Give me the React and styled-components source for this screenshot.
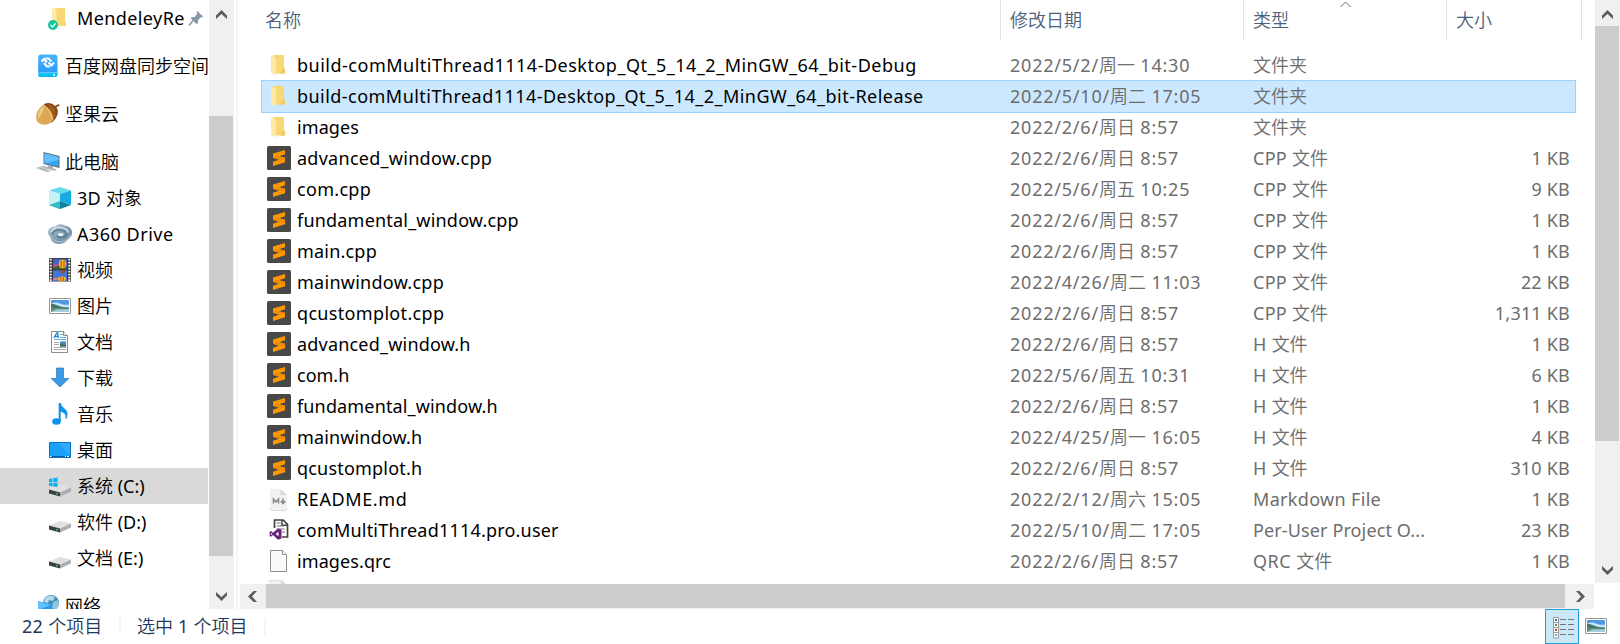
import React from 'react';
import styled, { createGlobalStyle, css } from 'styled-components';

const GlobalStyle = createGlobalStyle`
  * { box-sizing: border-box; }
  body {
    margin: 0;
    background: #fff;
    overflow: hidden;
    font-family: "Noto Sans", "Noto Sans CJK SC", sans-serif;
    font-size: 18px;
    color: #000;
  }
  svg { display: block; }
`;

const Window = styled.div`
  display: flex;
  flex-direction: column;
  width: 1620px;
  height: 644px;
  overflow: hidden;
`;

const Main = styled.div`
  display: flex;
  height: 609px;
  overflow: hidden;
`;

/* ---------- text runs ---------- */

const Hanzi = styled.span`
  font-weight: 350;
  letter-spacing: 0;
`;

function Mixed({ children }) {
  return String(children || '')
    .split(/([\u4e00-\u9fff]+)/)
    .filter(Boolean)
    .map((run, i) => (/[\u4e00-\u9fff]/.test(run) ? <Hanzi key={i}>{run}</Hanzi> : run));
}

/* ---------- navigation pane ---------- */

const NavPane = styled.nav`
  width: 209px;
  height: 609px;
  overflow: hidden;
`;

const NavItem = styled.div`
  display: flex;
  align-items: center;
  width: 208px;
  height: 36px;
  margin-top: ${p => (p.$gap ? 12 : 0)}px;
  padding-left: ${p => (p.$child ? 48 : 36)}px;
  background: ${p => (p.$selected ? '#d9d9d9' : 'transparent')};
  overflow: hidden;
`;

const NavIcon = styled.span`
  flex: none;
  width: 24px;
  height: 24px;
`;

const NavLabel = styled.span`
  flex: none;
  margin-left: 5px;
  line-height: 36px;
  white-space: pre;
  letter-spacing: ${p => p.$track || 0}px;
`;

const PinSlot = styled.span`
  flex: none;
  margin-left: 3px;
`;

const Splitter = styled.div`
  width: 6px;
  padding-left: 2px;
`;

const SplitterLine = styled.div`
  width: 2px;
  height: 609px;
  background: #f5f5f5;
`;

/* ---------- scroll bars ---------- */

const VerticalBar = styled.div`
  flex: none;
  display: flex;
  flex-direction: column;
  justify-content: space-between;
  width: 25px;
  height: ${p => p.$height}px;
  background: #f0f0f0;
`;

const VerticalArrow = styled.div`
  display: flex;
  justify-content: center;
  padding: ${p => (p.$end ? '0 0 8px' : '10px 0 0')};
  height: ${p => p.$size}px;
  align-items: ${p => (p.$end ? 'flex-end' : 'flex-start')};
`;

const VerticalThumb = styled.div`
  width: 24px;
  height: ${p => p.$size}px;
  background: #cdcdcd;
`;

const HorizontalBar = styled.div`
  display: flex;
  width: 1354px;
  height: 25px;
  background: #f0f0f0;
`;

const HorizontalArrow = styled.div`
  display: flex;
  align-items: center;
  width: ${p => p.$size}px;
  padding-left: ${p => p.$inset}px;
`;

const HorizontalThumb = styled.div`
  width: 1299px;
  height: 24px;
  background: #cdcdcd;
`;

/* ---------- file list ---------- */

const Content = styled.div`
  width: 1380px;
  display: flex;
  flex-direction: column;
`;

const ListArea = styled.div`
  display: flex;
  height: 584px;
`;

const FileView = styled.div`
  width: 1355px;
  height: 584px;
  overflow: hidden;
`;

const HeaderRow = styled.div`
  display: grid;
  grid-template-columns: 740px 243px 203px 135px;
  height: 40px;
  margin-left: 21px;
`;

const HeaderCell = styled.div`
  position: relative;
  height: 40px;
  padding-left: ${p => (p.$first ? 4 : 9)}px;
  border-right: 1px solid #e2e2e2;
  line-height: 41px;
  font-weight: 350;
  color: #4c607a;
`;

const SortMark = styled.span`
  position: absolute;
  top: 1px;
  left: 96px;
`;

const Rows = styled.div`
  padding: 10px 0 0 21px;
`;

const Row = styled.div`
  display: grid;
  grid-template-columns: 740px 243px 203px 129px;
  align-items: center;
  width: 1315px;
  height: 31px;
  ${p => p.$selected && css`
    height: 33px;
    margin: -1px 0;
    background: #cce8ff;
    box-shadow: inset 0 0 0 1px #99d1ff;
  `}
`;

const NameCell = styled.div`
  display: flex;
  align-items: center;
  padding-left: 5px;
  white-space: nowrap;
`;

const FileIcon = styled.span`
  flex: none;
  width: 26px;
  height: 25px;
  margin-right: 5px;
`;

const FileName = styled.span`
  line-height: 31px;
  letter-spacing: ${p => p.$track}px;
`;

const MetaCell = styled.div`
  padding-left: 9px;
  line-height: 31px;
  white-space: pre;
  color: #6d6d6d;
  letter-spacing: ${p => p.$track || 0}px;
`;

const SizeCell = styled(MetaCell)`
  padding-right: 6px;
  text-align: right;
`;

/* ---------- status bar ---------- */

const StatusBar = styled.footer`
  display: flex;
  align-items: flex-start;
  height: 35px;
  padding-left: 22px;
  color: #1e395b;
`;

const StatusText = styled.span`
  width: ${p => p.$width}px;
  line-height: 35px;
  white-space: pre;
  letter-spacing: 0.3px;
`;

const StatusDivider = styled.span`
  width: 2px;
  height: 17px;
  margin: 9px 16px 0 0;
  background: #f5f5f5;
`;

const ViewButtons = styled.div`
  display: flex;
  margin-left: auto;
  padding-right: 13px;
`;

const DetailsButton = styled.div`
  width: 34px;
  height: 35px;
  padding: 7px 0 0 7px;
  border: 1px solid #26a0da;
  background: #cbe8f6;
`;

const ThumbsButton = styled.div`
  padding: 9px 0 0 6px;
`;

/* ---------- glyphs ---------- */

const arrowPoints = {
  up: '0,5.6 5.5,0 11,5.6 11,9 5.5,4 0,9',
  down: '0,0 5.5,5 11,0 11,3.4 5.5,9 0,3.4',
  left: '5.6,0 9,0 4,5.5 9,11 5.6,11 0,5.5',
  right: '0,0 3.4,0 9,5.5 3.4,11 0,11 5,5.5',
};

function Arrow({ dir }) {
  const tall = dir === 'left' || dir === 'right';
  return (
    <svg width={tall ? 9 : 11} height={tall ? 11 : 9}>
      <polygon points={arrowPoints[dir]} fill="#5c5c5c" />
    </svg>
  );
}

function Folder() {
  return (
    <svg width="26" height="26" viewBox="0 0 26 26">
      <path d="M7 2h11v13l1 1v4.500H7z" fill="#f8d775" />
      <path d="M17.500 15l1.500 1v4.500H14z" fill="#f0ca62" />
      <path d="M5 2.200L10 5v17.500L5 20z" fill="#ffe9a6" />
    </svg>
  );
}

function SyncedFolder() {
  return (
    <svg width="24" height="24" viewBox="0 0 24 24">
      <path d="M7 2h10v13l1 1v4H8z" fill="#f8d775" />
      <path d="M4 2l4.500 2.500V22L4 20z" fill="#ffe9a6" />
      <circle cx="5" cy="19" r="5" fill="#10c99a" />
      <path d="M2.500 19l2 2 3.200-3.700" fill="none" stroke="#fff" strokeWidth="1.300" />
    </svg>
  );
}

function Pin() {
  return (
    <svg width="16" height="17" viewBox="0 0 16 17">
      <path d="M9.500 1l5.500 5.500-1.200 1-1-.3-2.800 3 .1 2.800-1.400 1.200-6-6 1.300-1.300 2.700.1L9.300 3.600 8.700 2z" fill="#8a99a8" />
      <path d="M5.300 10.300L1 15.500" stroke="#8a99a8" strokeWidth="1.600" />
    </svg>
  );
}

function BaiduDisk() {
  return (
    <svg width="24" height="24" viewBox="0 0 24 24">
      <defs>
        <linearGradient id="bd" x1="0" x2="0" y1="0" y2="1">
          <stop offset="0" stopColor="#48b4fb" />
          <stop offset="1" stopColor="#2c98fb" />
        </linearGradient>
      </defs>
      <path d="M4.500 .500h14.500q2.300 0 2.500 2.500v17H2.200V3Q2.300 .500 4.500 .500z" fill="url(#bd)" />
      <path d="M2 20.500q0-2 2-2h17.500v2.500q0 2-2 2H4q-2 0-2-2.500z" fill="#08bdf0" />
      <path d="M2.500 20.500q.3-1.800 2-1.800h16.500" fill="none" stroke="#86dcff" strokeWidth=".8" />
      <circle cx="18" cy="21" r="1" fill="#fff" />
      <g fill="none" stroke="#fff" strokeWidth="2">
        <path d="M5.500 7.500L8 5l3 3.200" />
        <path d="M9.500 4.500h3l3 3" />
        <path d="M18 8.500l-2.500 3-3-3" />
        <path d="M8 9l3 3.500h3" />
      </g>
    </svg>
  );
}

function Acorn() {
  return (
    <svg width="24" height="24" viewBox="0 0 24 24">
      <path d="M8 2Q15-.500 19 4l4-2 .700 1.600-3.200 1.700q3 5.200-.800 11.200L15.500 21z" fill="#874617" />
      <path d="M12 2q5 1 7 4.500l.700 8-3 5.500z" fill="#a05a20" />
      <path d="M7.500 2.500Q-1 9 .300 16.500.800 22 7.500 22.700q6.500.3 10-5.200Q16 7 7.500 2.500z" fill="#dda855" />
      <path d="M6.500 4.500Q1 10.500 2 17q5-5 6-13z" fill="#eccb86" />
      <path d="M8 3.500q6.500 5 8.500 14" fill="none" stroke="#f5ce80" strokeWidth="1" />
    </svg>
  );
}

function Computer() {
  return (
    <svg width="24" height="24" viewBox="0 0 24 24">
      <path d="M7.500 2l16 4v12l-16-4z" fill="#626b74" />
      <path d="M8.500 3.300l14 3.600v9.600l-14-3.300z" fill="#36a5f4" />
      <path d="M8.500 3.300l14 3.600v3l-14 3.300z" fill="#62c0ff" />
      <path d="M12 15l5 1.300v2l4 1.200-2 1.200-8-2z" fill="#a4b0b9" />
      <path d="M1 18l6-1.800 10 3-5 2.800z" fill="#dfe5e9" stroke="#9caab4" strokeWidth=".7" />
      <path d="M4 18.200l8 2.400M7 17l7 2.200M7 20l3-1.800M4.500 19l3-1.700" stroke="#8997a2" strokeWidth=".6" />
    </svg>
  );
}

function Cube() {
  return (
    <svg width="24" height="24" viewBox="0 0 24 24">
      <path d="M12 1l11 3.500L12 8 1 4.500z" fill="#68d9e8" />
      <path d="M1 19l11-4 11 4-11 4z" fill="#0e8299" />
      <path d="M1 19l11-4v8z" fill="#35bccb" />
      <path d="M1 4.500L12 8v7L1 19z" fill="#c5f2f5" />
      <path d="M23 4.500L12 8v7l11 4z" fill="#16ace0" />
    </svg>
  );
}

function A360() {
  return (
    <svg width="24" height="24" viewBox="0 0 24 24">
      <defs>
        <linearGradient id="swirl" x1="0" x2="1" y1="0" y2="1">
          <stop offset="0" stopColor="#b4ccd8" />
          <stop offset="1" stopColor="#58798d" />
        </linearGradient>
      </defs>
      <path d="M0 9Q1 5 7 4.500 11 .500 17 3.500q6 1 7 6 .500 5-4 7.500-3 5-10 5-7-1-7.500-6.500Q-.500 12.500 0 9z" fill="url(#swirl)" />
      <path d="M3 9.500q4-5 10-4 6 .800 7.500 5" fill="none" stroke="#d2e2e9" strokeWidth="1.500" />
      <path d="M4.500 13q0-4.500 6-5 7 0 7.500 4-.500 3.500-5.500 3.500-3.500-.500-3-2.500" fill="none" stroke="#5d7f93" strokeWidth="1.700" />
      <path d="M3.500 16q4 5 11 3.500 6-1.500 8-6.500" fill="none" stroke="#9db8c6" strokeWidth="1.600" />
      <path d="M9.500 12.300q3-2 6.500 0-1.500 2-4.500 1.700z" fill="#fff" />
    </svg>
  );
}

function Video() {
  const holes = [1.500, 4.500, 7.500, 10.500, 13.500, 16.500, 19.500, 22];
  return (
    <svg width="24" height="24" viewBox="0 0 24 24">
      <path d="M1 0h22v23.500H1z" fill="#3c3c3c" />
      {holes.map(y => (
        <g key={y} fill="#f5f5f5">
          <rect x="1.700" y={y - 0.700} width="2" height="1.700" />
          <rect x="20.300" y={y - 0.700} width="2" height="1.700" />
        </g>
      ))}
      <path d="M5 1h14v10H5z" fill="#3c63cf" />
      <path d="M5 12.500h14v10.500H5z" fill="#4177dc" />
      <path d="M5 7q3-3 5 0l3 4H5z" fill="#bf4c8b" />
      <path d="M5 9.500l5-1.500 9 2v1.200H5z" fill="#35632b" />
      <ellipse cx="14.500" cy="6" rx="3.800" ry="4.200" fill="#f2b21a" />
      <path d="M13.200 3v6M16 3v6" stroke="#c93a1c" strokeWidth=".9" />
      <path d="M12 12.500h5.500l-1.500 3h-2.500z" fill="#b9402a" />
      <ellipse cx="14" cy="21" rx="4" ry="2.400" fill="#f5b51b" />
      <path d="M12.700 19v4M15.300 19v4" stroke="#b92e1c" strokeWidth=".8" />
      <path d="M5 20.500l4-1 1 2-5 1z" fill="#d3869c" />
    </svg>
  );
}

function Picture({ size = 24 }) {
  return (
    <svg width={size} height={size === 24 ? 24 : 16} viewBox={size === 24 ? '0 0 24 24' : '1 4 22 16'}>
      <path d="M1.500 4.500h21v15h-21z" fill="#fff" stroke="#969696" />
      <path d="M3 6h18v12H3z" fill="#4f96e6" />
      <path d="M3 9.500q5-2 9 0t9 1v3H3z" fill="#c8e4f8" />
      <path d="M3 9.500l5 1.300 5 2 8 1.200v1.500H3z" fill="#427562" />
      <path d="M3 13.500l8 .500 10 1v3H3z" fill="#608f79" />
      <path d="M8 15.500l13-.500v3H3z" fill="#a9cbd4" />
    </svg>
  );
}

function Document() {
  return (
    <svg width="24" height="24" viewBox="0 0 24 24">
      <path d="M3.500 1.500h12l4 4v17h-16z" fill="#fff" stroke="#8d8d8d" />
      <path d="M15.500 1.500v4h4" fill="#eee" stroke="#8d8d8d" />
      <path d="M6 8l2.800-5h1l.5 5M7 6.500h3" fill="none" stroke="#2485d0" strokeWidth="1.300" />
      <path d="M12 4.500h3M12 7.500h6M6 9.500h12" stroke="#61aee3" />
      <path d="M6 12.500h5M6 14.500h5M6 17.500h12M6 19.500h12" stroke="#aaa" />
      <path d="M12 11.500h6v5h-6z" fill="#4884ba" />
      <path d="M12 14l6 1v1.500h-6z" fill="#356f5e" />
    </svg>
  );
}

function Download() {
  return (
    <svg width="24" height="24" viewBox="0 0 24 24">
      <path d="M8.500 2h7v10.500h5.300L12 21 3.200 12.500h5.300z" fill="#3b99e6" stroke="#2478bd" strokeWidth=".7" />
    </svg>
  );
}

function Music() {
  return (
    <svg width="24" height="24" viewBox="0 0 24 24">
      <ellipse cx="8.500" cy="19.500" rx="4.300" ry="3.300" fill="#0a94ec" />
      <path d="M10.700 1h2q.5 3.500 4 5.800 4.500 3 1.700 10.200l-1-.200q1.500-5.500-4.700-7.300v10h-2z" fill="#0a94ec" />
    </svg>
  );
}

function Desktop() {
  return (
    <svg width="24" height="24" viewBox="0 0 24 24">
      <path d="M1.500 4.500h21v15h-21z" fill="#1ba0fb" stroke="#0872bd" />
      <path d="M22 5v12L10 5z" fill="#42b2ff" opacity=".6" />
      <path d="M2 18.500h20" stroke="#075f9f" />
      <path d="M2 18.500h1.500M17 18.500h1M19 18.500h2" stroke="#fff" />
    </svg>
  );
}

function Drive({ system }) {
  return (
    <svg width="24" height="24" viewBox="0 0 24 24">
      <path d="M1 15.500L12 11l11 2.500-11 5z" fill="#dfe0e1" />
      <path d="M1 15.500l11 3v4l-11-3z" fill="#3b3f3d" />
      <path d="M12 18.500l11-5v4l-11 5z" fill="#acaeb0" />
      <path d="M8 18.700l2 .5v1.500l-2-.5z" fill="#38c244" />
      {system && <path d="M1 5l3.500-.600V8H1zM5.300 4.300L9.500 3.600V8H5.300zM1 8.800h3.500v3.500L1 11.700zM5.300 8.800h4.200v4.300l-4.200-.7z" fill="#09b2ef" />}
    </svg>
  );
}

function Network() {
  return (
    <svg width="24" height="24" viewBox="0 0 24 24">
      <circle cx="15" cy="9" r="8" fill="#3f91bf" />
      <path d="M9 4q5-4 10-1l-2 4-4-1-1 3-4-1z" fill="#b5dae8" />
      <path d="M17 8l5-2 1 5-3 5-4-2z" fill="#93c5dc" />
      <path d="M2 7l13 4v11L2 18z" fill="#2399ee" />
      <path d="M2 7l13 4-13 5z" fill="#61c2ff" />
    </svg>
  );
}

function Sublime() {
  return (
    <svg width="26" height="25" viewBox="0 0 26 25">
      <rect x="1" y="0" width="24" height="24" rx="1.500" fill="#484848" />
      <path d="M7 7.500L19 4v4.300l-6 1.900 6 1.600v4.400L7 20v-4.300l6-2-6-1.900z" fill="#ff9800" />
      <path d="M7 11.800V10.300l6 -.100 6 1.600v1.700l-6 .200z" fill="#f08c04" />
    </svg>
  );
}

function Markdown() {
  return (
    <svg width="26" height="25" viewBox="0 0 26 25">
      <path d="M5 2h10l6 6v13.500q0 2-2 2H6q-2 0-2-2V3q0-1 1-1z" fill="#f1f1f1" />
      <path d="M4 21q0 2.500 2 2.500h13q2 0 2-2.500" fill="none" stroke="#dcdcdc" />
      <path d="M14.500 2.200V8H21z" fill="#dadada" />
      <path d="M7.500 16.500v-4.500l2.500 2.700 2.500-2.700v4.500M17 11.500v4M14.800 14l2.200 2.500 2.200-2.500" fill="none" stroke="#8b8b8b" strokeWidth="1.600" />
    </svg>
  );
}

function VisualStudio() {
  return (
    <svg width="26" height="25" viewBox="0 1 26 25">
      <path d="M8.500 11V3h8.700l4.300 4.300v12.700H16" fill="#fff" stroke="#424242" strokeWidth="1.700" />
      <path d="M16 3v5.300h5.500" fill="none" stroke="#424242" strokeWidth="1.500" />
      <path d="M10.500 6h4M10.500 9h8M10.500 12h8M16 15h3" stroke="#777" strokeWidth="1.200" />
      <path d="M12 11.500l3.500 1.300v8.700L12 22.800l-5-4.700-2 1.700-1.300-.8v-4.200l1.300-.8 2 1.700z" fill="#68217a" />
      <path d="M12.500 14.800v4.400L9.600 17zM5 15.700v2.600L6.400 17z" fill="#fff" />
    </svg>
  );
}

function BlankFile() {
  return (
    <svg width="26" height="25" viewBox="0 1 26 25">
      <path d="M4.500 2.500h12l4 4v17h-16z" fill="#fafafa" stroke="#8f8f8f" />
      <path d="M16.500 2.500v4h4" fill="#fff" stroke="#8f8f8f" />
    </svg>
  );
}

function FadedFile() {
  return (
    <svg width="26" height="25" viewBox="0 2 26 25">
      <path d="M3 3q0-1 1-1h11.500l5 5v17H3z" fill="#f3f3f3" />
      <path d="M3 3.500q0-1.200 1-1.200h11.500M15.500 2.300V7h5z" fill="#ddd" stroke="#dcdcdc" />
    </svg>
  );
}

function DetailsGlyph() {
  return (
    <svg width="22" height="22" viewBox="0 0 22 22">
      <path d="M.500 .500h5v20.500h-5z" fill="#fff" stroke="#999" />
      <path d="M1 5.500h4M1 10.500h4M1 15.500h4" stroke="#999" />
      <path d="M2 2h2v2H2z" fill="#3d7c96" />
      <path d="M2 7h2v2H2z" fill="#778844" />
      <path d="M2 12h2v2H2z" fill="#c23e20" />
      <path d="M2 17h2v2H2z" fill="#8aa5b5" />
      <path d="M7 2.500h6M15 2.500h6M7 7.500h6M15 7.500h6M7 12.500h6M15 12.500h6M7 17.500h6M15 17.500h6" stroke="#777" />
    </svg>
  );
}

const navItems = [
  { label: '百度网盘同步空间', icon: BaiduDisk, gap: true },
  { label: '坚果云', icon: Acorn, gap: true },
  { label: '此电脑', icon: Computer, gap: true },
  { label: '3D 对象', icon: Cube, child: true, track: 0.3 },
  { label: 'A360 Drive', icon: A360, child: true, track: 0.5 },
  { label: '视频', icon: Video, child: true },
  { label: '图片', icon: Picture, child: true },
  { label: '文档', icon: Document, child: true },
  { label: '下载', icon: Download, child: true },
  { label: '音乐', icon: Music, child: true },
  { label: '桌面', icon: Desktop, child: true },
  { label: '系统 (C:)', icon: () => <Drive system />, child: true, selected: true },
  { label: '软件 (D:)', icon: Drive, child: true },
  { label: '文档 (E:)', icon: Drive, child: true },
  { label: '网络', icon: Network, gap: true },
];

const SUNDAY = '2022/2/6/周日 8:57';

const files = [
  { name: 'build-comMultiThread1114-Desktop_Qt_5_14_2_MinGW_64_bit-Debug', track: 0.5, date: '2022/5/2/周一 14:30', type: '文件夹', icon: Folder },
  { name: 'build-comMultiThread1114-Desktop_Qt_5_14_2_MinGW_64_bit-Release', track: 0.46, date: '2022/5/10/周二 17:05', type: '文件夹', icon: Folder, selected: true },
  { name: 'images', track: 0.1, date: SUNDAY, type: '文件夹', icon: Folder },
  { name: 'advanced_window.cpp', track: 0.27, date: SUNDAY, type: 'CPP 文件', size: '1 KB' },
  { name: 'com.cpp', track: 0.3, date: '2022/5/6/周五 10:25', type: 'CPP 文件', size: '9 KB' },
  { name: 'fundamental_window.cpp', date: SUNDAY, type: 'CPP 文件', size: '1 KB' },
  { name: 'main.cpp', date: SUNDAY, type: 'CPP 文件', size: '1 KB' },
  { name: 'mainwindow.cpp', track: 0.27, date: '2022/4/26/周二 11:03', type: 'CPP 文件', size: '22 KB' },
  { name: 'qcustomplot.cpp', track: 0.33, date: SUNDAY, type: 'CPP 文件', size: '1,311 KB' },
  { name: 'advanced_window.h', date: SUNDAY, type: 'H 文件', size: '1 KB' },
  { name: 'com.h', track: 0, date: '2022/5/6/周五 10:31', type: 'H 文件', size: '6 KB' },
  { name: 'fundamental_window.h', track: 0.15, date: SUNDAY, type: 'H 文件', size: '1 KB' },
  { name: 'mainwindow.h', track: 0.13, date: '2022/4/25/周一 16:05', type: 'H 文件', size: '4 KB' },
  { name: 'qcustomplot.h', date: SUNDAY, type: 'H 文件', size: '310 KB' },
  { name: 'README.md', track: 0.6, date: '2022/2/12/周六 15:05', type: 'Markdown File', typeTrack: 0.33, size: '1 KB', icon: Markdown },
  { name: 'comMultiThread1114.pro.user', date: '2022/5/10/周二 17:05', type: 'Per-User Project O...', typeTrack: 0.12, size: '23 KB', icon: VisualStudio },
  { name: 'images.qrc', track: 0.1, date: SUNDAY, type: 'QRC 文件', typeTrack: 0.5, size: '1 KB', icon: BlankFile },
];

function NavEntry({ item }) {
  const Icon = item.icon;
  return (
    <NavItem $gap={item.gap} $child={item.child} $selected={item.selected}>
      <NavIcon><Icon /></NavIcon>
      <NavLabel $track={item.track}><Mixed>{item.label}</Mixed></NavLabel>
    </NavItem>
  );
}

function FileRow({ file }) {
  const Icon = file.icon || Sublime;
  return (
    <Row $selected={file.selected}>
      <NameCell>
        <FileIcon><Icon /></FileIcon>
        <FileName $track={file.track ?? 0.2}>{file.name}</FileName>
      </NameCell>
      <MetaCell $track={0.78}><Mixed>{file.date}</Mixed></MetaCell>
      <MetaCell $track={file.typeTrack ?? 0.3}><Mixed>{file.type}</Mixed></MetaCell>
      <SizeCell $track={0.2}>{file.size}</SizeCell>
    </Row>
  );
}

export default function App() {
  return (
    <Window>
      <GlobalStyle />
      <Main>
        <NavPane>
          <NavItem $child>
            <NavIcon><SyncedFolder /></NavIcon>
            <NavLabel $track={0.4}>MendeleyRe</NavLabel>
            <PinSlot><Pin /></PinSlot>
          </NavItem>
          {navItems.map(item => <NavEntry key={item.label} item={item} />)}
        </NavPane>
        <VerticalBar $height={609}>
          <VerticalArrow $size={116}><Arrow dir="up" /></VerticalArrow>
          <VerticalThumb $size={440} />
          <VerticalArrow $size={53} $end><Arrow dir="down" /></VerticalArrow>
        </VerticalBar>
        <Splitter><SplitterLine /></Splitter>
        <Content>
          <ListArea>
            <FileView>
              <HeaderRow>
                <HeaderCell $first>名称</HeaderCell>
                <HeaderCell>修改日期</HeaderCell>
                <HeaderCell>
                  类型
                  <SortMark>
                    <svg width="11" height="7"><path d="M.500 6L5.500 1l5 5" fill="none" stroke="#6b6b6b" /></svg>
                  </SortMark>
                </HeaderCell>
                <HeaderCell>大小</HeaderCell>
              </HeaderRow>
              <Rows>
                {files.map(file => <FileRow key={file.name} file={file} />)}
                <Row>
                  <NameCell><FileIcon><FadedFile /></FileIcon></NameCell>
                </Row>
              </Rows>
            </FileView>
            <VerticalBar $height={583}>
              <VerticalArrow $size={26}><Arrow dir="up" /></VerticalArrow>
              <VerticalThumb $size={415} />
              <VerticalArrow $size={142} $end><Arrow dir="down" /></VerticalArrow>
            </VerticalBar>
          </ListArea>
          <HorizontalBar>
            <HorizontalArrow $size={26} $inset={8}><Arrow dir="left" /></HorizontalArrow>
            <HorizontalThumb />
            <HorizontalArrow $size={29} $inset={11}><Arrow dir="right" /></HorizontalArrow>
          </HorizontalBar>
        </Content>
      </Main>
      <StatusBar>
        <StatusText $width={97}><Mixed>22 个项目</Mixed></StatusText>
        <StatusDivider />
        <StatusText $width={127}><Mixed>选中 1 个项目</Mixed></StatusText>
        <StatusDivider />
        <ViewButtons>
          <DetailsButton><DetailsGlyph /></DetailsButton>
          <ThumbsButton><Picture size={22} /></ThumbsButton>
        </ViewButtons>
      </StatusBar>
    </Window>
  );
}
